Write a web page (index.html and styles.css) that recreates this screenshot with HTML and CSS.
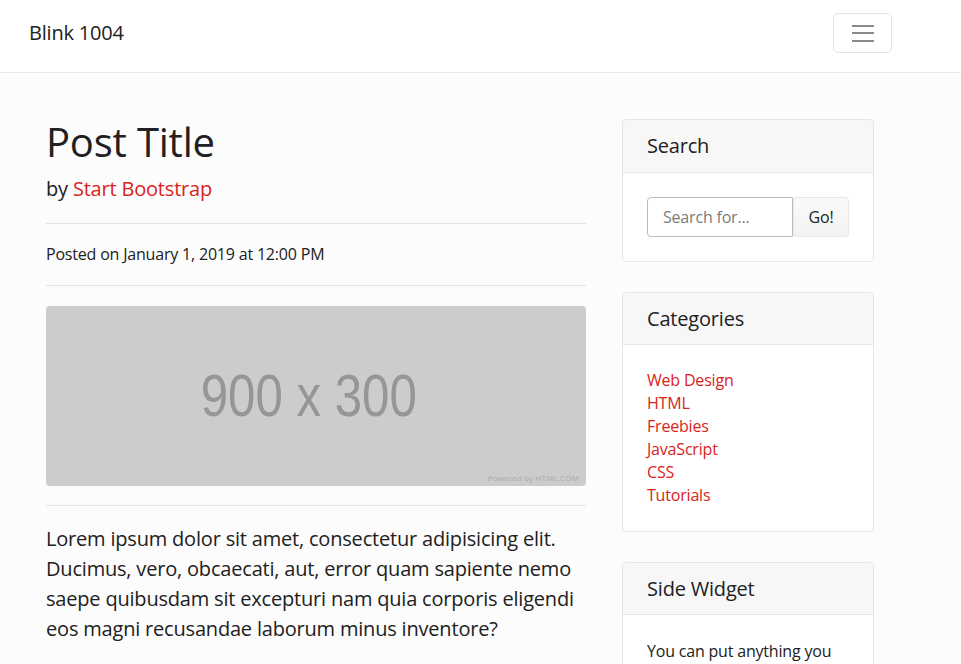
FILE: index.html
```html
<!DOCTYPE html>
<html lang="en">
<head>
<meta charset="utf-8">
<title>Blink 1004</title>
<link rel="stylesheet" href="styles.css">
</head>
<body>
<nav class="navbar">
  <a class="brand" href="#">Blink 1004</a>
  <button class="toggler" type="button" aria-label="Toggle navigation">
    <span class="toggler-bar"></span>
    <span class="toggler-bar"></span>
    <span class="toggler-bar"></span>
  </button>
</nav>

<div class="page">
  <main class="post">
    <h1 class="post-title">Post Title</h1>
    <p class="lead byline">by <a href="#">Start Bootstrap</a></p>
    <hr class="rule">
    <p class="posted">Posted on January 1, 2019 at 12:00 PM</p>
    <hr class="rule">
    <div class="placeholder">
      <span class="placeholder-text">900 x 300</span>
      <span class="placeholder-credit">Powered by HTML.COM</span>
    </div>
    <hr class="rule">
    <p class="lead body-lead">Lorem ipsum dolor sit amet, consectetur adipisicing elit. Ducimus, vero, obcaecati, aut, error quam sapiente nemo saepe quibusdam sit excepturi nam quia corporis eligendi eos magni recusandae laborum minus inventore?</p>
  </main>

  <aside class="sidebar">
    <section class="card">
      <h5 class="card-header">Search</h5>
      <div class="card-body">
        <div class="input-group">
          <input class="search-input" type="text" placeholder="Search for...">
          <button class="go-btn" type="button">Go!</button>
        </div>
      </div>
    </section>

    <section class="card">
      <h5 class="card-header card-header-tight">Categories</h5>
      <div class="card-body card-body-tight">
        <ul class="cat-list">
          <li><a href="#">Web Design</a></li>
          <li><a href="#">HTML</a></li>
          <li><a href="#">Freebies</a></li>
          <li><a href="#">JavaScript</a></li>
          <li><a href="#">CSS</a></li>
          <li><a href="#">Tutorials</a></li>
        </ul>
      </div>
    </section>

    <section class="card">
      <h5 class="card-header card-header-tight">Side Widget</h5>
      <div class="card-body">
        <p class="widget-text">You can put anything you want inside of these side widgets. They are easy to use, and feature the new Bootstrap 4 card containers!</p>
      </div>
    </section>
  </aside>
</div>
</body>
</html>
```

FILE: styles.css
```css
* {
  box-sizing: border-box;
}

html, body {
  margin: 0;
  padding: 0;
}

body {
  font-family: "Open Sans", "Noto Sans", sans-serif;
  font-size: 16px;
  line-height: 1.5;
  letter-spacing: -0.012em;
  color: #212121;
  background: #fcfcfc;
}

a {
  color: #da2320;
  text-decoration: none;
}

/* Navbar */
.navbar {
  height: 73px;
  background: #ffffff;
  border-bottom: 1px solid #e8e8e8;
  display: flex;
  align-items: center;
  justify-content: space-between;
  padding: 0 69px 6px 29px;
}

.brand {
  color: #212121;
  font-size: 20px;
  line-height: 30px;
}

.toggler {
  width: 59px;
  height: 40px;
  background: #ffffff;
  border: 1px solid #e2e2e2;
  border-radius: 5px;
  display: flex;
  flex-direction: column;
  align-items: center;
  justify-content: center;
  gap: 5.5px;
  padding: 0;
}

.toggler-bar {
  display: block;
  width: 22px;
  height: 2px;
  background: #8a8a8a;
}

/* Page layout */
.page {
  display: flex;
  align-items: flex-start;
  padding: 45px 46px 0 46px;
}

.post {
  flex: 0 0 540px;
  width: 540px;
}

.sidebar {
  flex: 0 0 252px;
  width: 252px;
  margin-left: 36px;
  padding-top: 1px;
  display: flex;
  flex-direction: column;
  gap: 30px;
}

/* Post */
.post-title {
  margin: 0 0 8px 0;
  font-size: 40px;
  line-height: 48px;
  font-weight: 400;
  color: #212121;
}

.lead {
  font-size: 20px;
  line-height: 30px;
  font-weight: 400;
  margin: 0;
}

.rule {
  border: 0;
  border-top: 1px solid #e3e3e3;
  margin: 19px 0 18px 0;
  height: 0;
}

.posted {
  margin: 0;
  font-size: 16px;
  line-height: 24px;
}

.placeholder {
  position: relative;
  height: 180px;
  margin-top: 20px;
  background: #cccccc;
  border-radius: 4px;
  display: flex;
  align-items: center;
  justify-content: center;
}

.placeholder-text {
  display: inline-block;
  margin-right: 14px;
  font-family: "Liberation Sans", Arial, sans-serif;
  letter-spacing: 0;
  font-size: 60px;
  line-height: 1;
  color: #969696;
  transform: scaleX(0.82);
}

.placeholder-credit {
  position: absolute;
  right: 7px;
  bottom: 3px;
  font-size: 8px;
  line-height: 10px;
  letter-spacing: 0.02em;
  color: #a9a9a9;
}

.body-lead {
  margin-top: 0;
}

/* Cards */
.card {
  background: #ffffff;
  border: 1px solid #e6e6e6;
  border-radius: 4px;
  overflow: hidden;
}

.card-header {
  margin: 0;
  padding: 12px 24px;
  font-size: 20px;
  line-height: 28px;
  font-weight: 400;
  color: #212121;
  background: #f7f7f7;
  border-bottom: 1px solid #e6e6e6;
}

.card-header-tight {
  line-height: 27px;
}

.card-body {
  padding: 24px;
}

.card-body-tight {
  padding-bottom: 24px;
}

.input-group {
  display: flex;
  height: 40px;
}

.search-input {
  width: 146px;
  height: 40px;
  border: 1px solid #bbbbbb;
  border-radius: 4px 0 0 4px;
  padding: 0 15px;
  font-family: inherit;
  font-size: 16px;
  letter-spacing: -0.012em;
  color: #212121;
  background: #ffffff;
  outline: none;
}

.search-input::placeholder {
  color: #7a7a7a;
}

.go-btn {
  width: 56px;
  height: 40px;
  border: 1px solid #e8e8e8;
  border-radius: 4px;
  background: linear-gradient(#fafafa, #f3f3f3);
  font-family: inherit;
  font-size: 16px;
  letter-spacing: -0.012em;
  color: #212121;
  padding: 0;
}

.cat-list {
  list-style: none;
  margin: 0;
  padding: 0;
  line-height: 23px;
}

.widget-text {
  margin: 0;
}
```
